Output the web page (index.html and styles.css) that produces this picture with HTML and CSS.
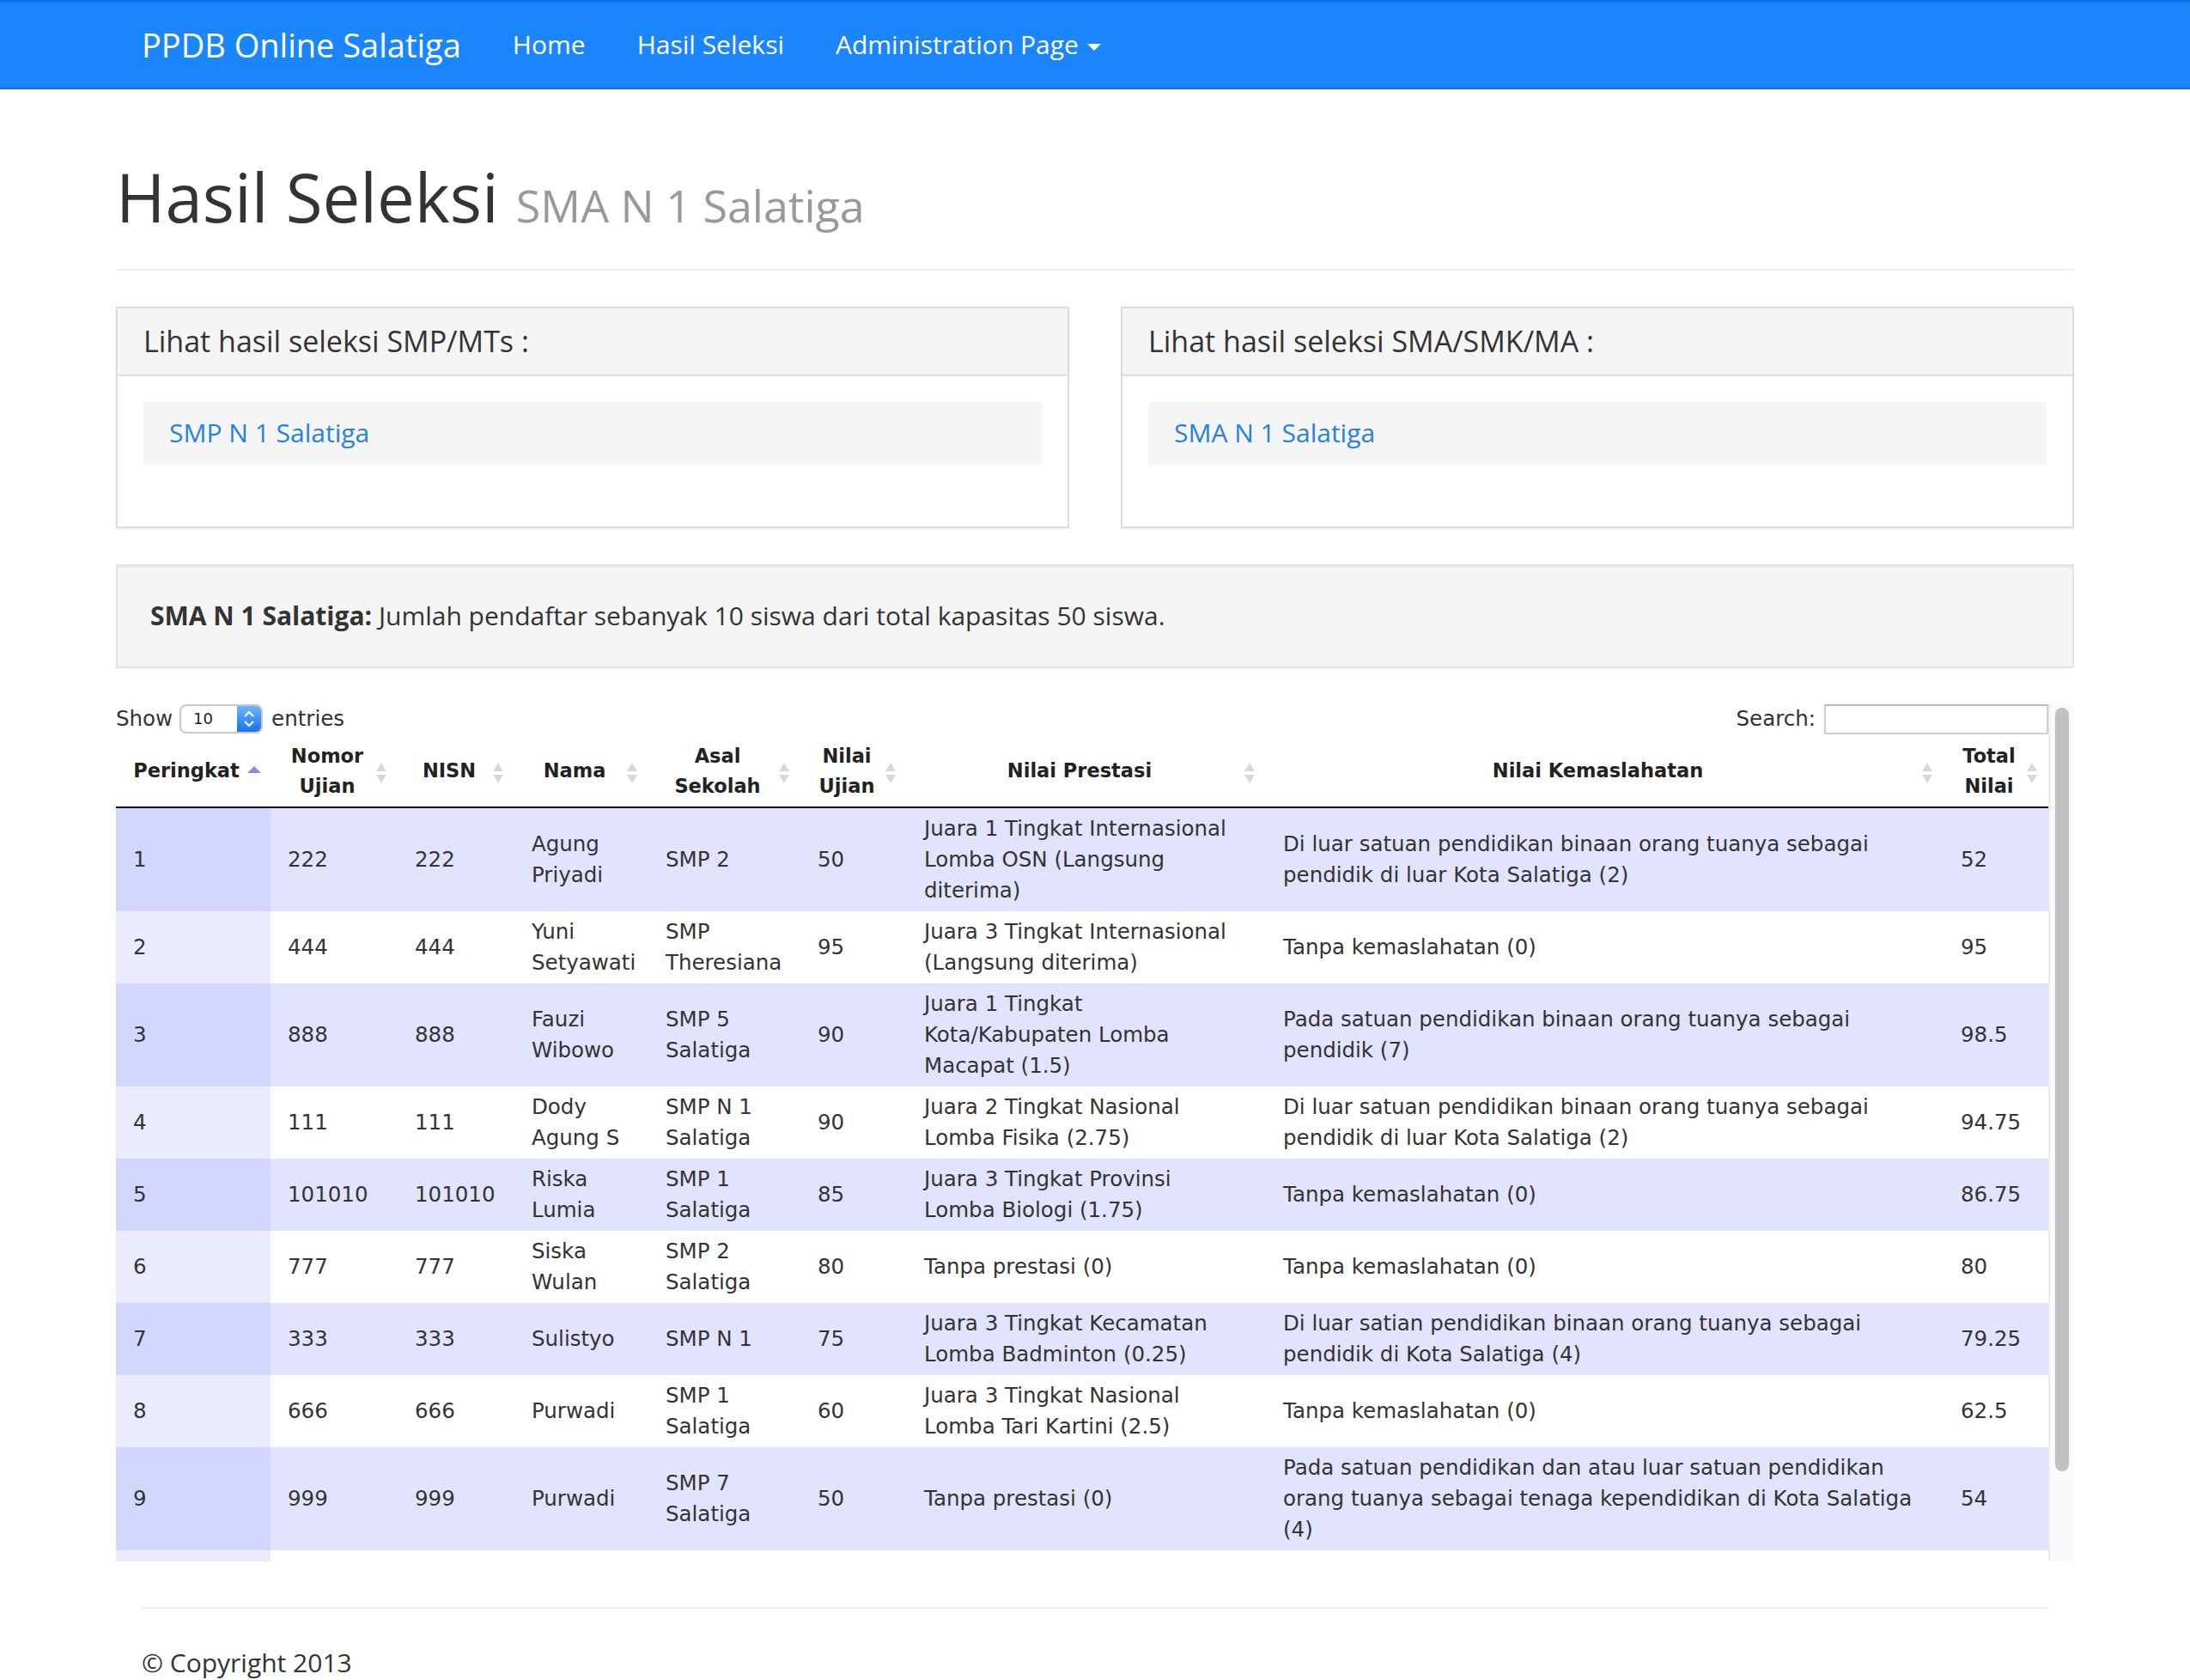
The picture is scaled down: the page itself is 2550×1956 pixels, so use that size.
FILE: index.html
```html
<!DOCTYPE html>
<html lang="id">
<head>
<meta charset="utf-8">
<title>Hasil Seleksi - PPDB Online Salatiga</title>
<link rel="stylesheet" href="styles.css">
</head>
<body>
<nav class="navbar">
  <div class="navbar-inner">
    <a class="brand" href="#">PPDB Online Salatiga</a>
    <ul class="nav">
      <li><a href="#">Home</a></li>
      <li><a href="#">Hasil Seleksi</a></li>
      <li><a href="#">Administration Page <span class="caret"></span></a></li>
    </ul>
  </div>
</nav>

<main class="container">
  <div class="page-header">
    <h1>Hasil Seleksi <small>SMA N 1 Salatiga</small></h1>
  </div>

  <div class="panels">
    <section class="panel">
      <div class="panel-heading"><h3 class="panel-title">Lihat hasil seleksi SMP/MTs :</h3></div>
      <div class="panel-body">
        <div class="link-box"><a href="#">SMP N 1 Salatiga</a></div>
      </div>
    </section>
    <section class="panel">
      <div class="panel-heading"><h3 class="panel-title">Lihat hasil seleksi SMA/SMK/MA :</h3></div>
      <div class="panel-body">
        <div class="link-box"><a href="#">SMA N 1 Salatiga</a></div>
      </div>
    </section>
  </div>

  <div class="well"><strong>SMA N 1 Salatiga:</strong> Jumlah pendaftar sebanyak 10 siswa dari total kapasitas 50 siswa.</div>

  <div class="dt-frame">
    <div class="dt-content">
      <div class="dt-controls">
        <label class="dt-length">Show
          <span class="len-select"><span class="len-val">10</span><span class="len-btn"><svg width="28" height="30" viewBox="0 0 28 30"><polyline points="9,12 14,7 19,12" fill="none" stroke="#fff" stroke-width="2.2"/><polyline points="9,18 14,23 19,18" fill="none" stroke="#fff" stroke-width="2.2"/></svg></span></span>
          entries</label>
        <label class="dt-filter">Search: <input type="text" class="search-input"></label>
      </div>
      <table class="display">
        <colgroup>
          <col class="c-rank"><col class="c-nomor"><col class="c-nisn"><col class="c-nama"><col class="c-asal"><col class="c-nilai"><col class="c-prestasi"><col class="c-kemas"><col class="c-total">
        </colgroup>
        <thead>
          <tr>
            <th class="sort-asc">Peringkat</th>
            <th class="sort-both">Nomor Ujian</th>
            <th class="sort-both">NISN</th>
            <th class="sort-both">Nama</th>
            <th class="sort-both">Asal Sekolah</th>
            <th class="sort-both">Nilai Ujian</th>
            <th class="sort-both">Nilai Prestasi</th>
            <th class="sort-both">Nilai Kemaslahatan</th>
            <th class="sort-both">Total Nilai</th>
          </tr>
        </thead>
        <tbody>
          <tr class="odd"><td class="sorting_1">1</td><td>222</td><td>222</td><td>Agung Priyadi</td><td>SMP 2</td><td>50</td><td class="prestasi">Juara 1 Tingkat Internasional Lomba OSN (Langsung diterima)</td><td>Di luar satuan pendidikan binaan orang tuanya sebagai pendidik di luar Kota Salatiga (2)</td><td>52</td></tr>
          <tr class="even"><td class="sorting_1">2</td><td>444</td><td>444</td><td>Yuni Setyawati</td><td>SMP Theresiana</td><td>95</td><td class="prestasi">Juara 3 Tingkat Internasional (Langsung diterima)</td><td>Tanpa kemaslahatan (0)</td><td>95</td></tr>
          <tr class="odd"><td class="sorting_1">3</td><td>888</td><td>888</td><td>Fauzi Wibowo</td><td>SMP 5 Salatiga</td><td>90</td><td class="prestasi">Juara 1 Tingkat Kota/&#8288;Kabupaten Lomba Macapat (1.5)</td><td>Pada satuan pendidikan binaan orang tuanya sebagai pendidik (7)</td><td>98.5</td></tr>
          <tr class="even"><td class="sorting_1">4</td><td>111</td><td>111</td><td>Dody Agung S</td><td>SMP N 1 Salatiga</td><td>90</td><td class="prestasi">Juara 2 Tingkat Nasional Lomba Fisika (2.75)</td><td>Di luar satuan pendidikan binaan orang tuanya sebagai pendidik di luar Kota Salatiga (2)</td><td>94.75</td></tr>
          <tr class="odd"><td class="sorting_1">5</td><td>101010</td><td>101010</td><td>Riska Lumia</td><td>SMP 1 Salatiga</td><td>85</td><td class="prestasi">Juara 3 Tingkat Provinsi Lomba Biologi (1.75)</td><td>Tanpa kemaslahatan (0)</td><td>86.75</td></tr>
          <tr class="even"><td class="sorting_1">6</td><td>777</td><td>777</td><td>Siska Wulan</td><td>SMP 2 Salatiga</td><td>80</td><td class="prestasi">Tanpa prestasi (0)</td><td>Tanpa kemaslahatan (0)</td><td>80</td></tr>
          <tr class="odd"><td class="sorting_1">7</td><td>333</td><td>333</td><td>Sulistyo</td><td>SMP N 1</td><td>75</td><td class="prestasi">Juara 3 Tingkat Kecamatan Lomba Badminton (0.25)</td><td>Di luar satian pendidikan binaan orang tuanya sebagai pendidik di Kota Salatiga (4)</td><td>79.25</td></tr>
          <tr class="even"><td class="sorting_1">8</td><td>666</td><td>666</td><td>Purwadi</td><td>SMP 1 Salatiga</td><td>60</td><td class="prestasi">Juara 3 Tingkat Nasional Lomba Tari Kartini (2.5)</td><td>Tanpa kemaslahatan (0)</td><td>62.5</td></tr>
          <tr class="odd"><td class="sorting_1">9</td><td>999</td><td>999</td><td>Purwadi</td><td>SMP 7 Salatiga</td><td>50</td><td class="prestasi">Tanpa prestasi (0)</td><td>Pada satuan pendidikan dan atau luar satuan pendidikan orang tuanya sebagai tenaga kependidikan di Kota Salatiga (4)</td><td>54</td></tr>
          <tr class="even"><td class="sorting_1">10</td><td>555</td><td>555</td><td>Budi Santoso</td><td>SMP 3 Salatiga</td><td>45</td><td class="prestasi">Tanpa prestasi (0)</td><td>Pada satuan pendidikan dan atau luar satuan pendidikan orang tuanya sebagai tenaga kependidikan di Kota Salatiga (4)</td><td>49</td></tr>
        </tbody>
      </table>
    </div>
    <div class="dt-track"><div class="dt-thumb"></div></div>
  </div>

  <footer class="footer">
    <hr>
    <p>&copy; Copyright 2013</p>
  </footer>
</main>
</body>
</html>
```
FILE: styles.css
```css
* { box-sizing: border-box; }
html, body { margin: 0; padding: 0; }
body {
  font-family: "Open Sans", "Liberation Sans", sans-serif;
  font-size: 30px;
  line-height: 1.428571;
  color: #333;
  background: #fff;
}
a { color: #2780e3; text-decoration: none; }

/* navbar */
.navbar {
  background: #1b86fc;
  border-top: 2px solid #0d6fdc;
  border-bottom: 2px solid #0d6fdc;
  height: 104px;
}
.navbar-inner {
  width: 2340px;
  margin: 0 auto;
  padding: 0 30px;
  height: 100px;
  display: flex;
  align-items: center;
}
.brand {
  color: #fff;
  font-size: 38px;
  line-height: 40px;
  padding: 30px;
}
.nav { display: flex; list-style: none; margin: 0; padding: 0; }
.nav a {
  display: block;
  color: #fff;
  padding: 30px;
  line-height: 40px;
}
.caret {
  display: inline-block;
  width: 0;
  height: 0;
  margin-left: 2px;
  vertical-align: middle;
  border-top: 8px solid #fff;
  border-left: 8px solid transparent;
  border-right: 8px solid transparent;
}

/* layout */
.container { width: 2340px; margin: 0 auto; padding: 0 30px; }

.page-header {
  margin: 83px 0 42px;
  padding-bottom: 19px;
  border-bottom: 2px solid #eee;
}
.page-header h1 {
  margin: 0 0 21px;
  font-size: 78px;
  font-weight: 400;
  line-height: 1.1;
  color: #333;
}
.page-header h1 small { font-size: 52px; color: #999; font-weight: 400; }

.panels {
  display: grid;
  grid-template-columns: 1fr 1fr;
  gap: 60px;
  margin-bottom: 42px;
}
.panel {
  border: 2px solid #ddd;
  background: #fff;
  box-shadow: 0 2px 2px rgba(0,0,0,0.05);
}
.panel-heading {
  background: #f5f5f5;
  border-bottom: 2px solid #ddd;
  padding: 20px 30px;
}
.panel-title { margin: 0; font-size: 34px; line-height: 1.1; font-weight: 400; color: #333; }
.panel-body { padding: 30px; }
.link-box {
  background: #f5f5f5;
  padding: 15px 30px;
  margin-bottom: 42px;
}

.well {
  background: #f5f5f5;
  border: 2px solid #e3e3e3;
  box-shadow: inset 0 2px 2px rgba(0,0,0,0.05);
  padding: 37px 38px;
  margin-bottom: 42px;
}
.well strong { font-weight: 700; }

/* data table in a scrolling frame */
.dt-frame {
  display: flex;
  height: 998px;
  font-family: "DejaVu Sans", Verdana, sans-serif;
  font-size: 24.5px;
  line-height: 36px;
  color: #333;
}
.dt-content {
  flex: 1;
  min-width: 0;
  overflow: hidden;
}
.dt-track {
  flex: 0 0 30px;
  background: #fafafa;
  border-left: 2px solid #ececec;
  padding: 4px 6px 0 6px;
}
.dt-thumb {
  height: 889px;
  background: #c1c1c1;
  border-radius: 8px;
}
.dt-controls {
  display: flex;
  justify-content: space-between;
  height: 37px;
}
.dt-length, .dt-filter {
  display: flex;
  align-items: center;
  height: 35px;
  white-space: nowrap;
}
.len-select {
  display: inline-flex;
  width: 97px;
  height: 34px;
  margin: 0 10px 0 8px;
  border: 2px solid #c8c8c8;
  border-radius: 8px;
  background: #fff;
  overflow: hidden;
}
.len-val {
  flex: 1;
  font-size: 18px;
  line-height: 30px;
  padding-left: 14px;
  color: #222;
}
.len-btn {
  width: 28px;
  background: linear-gradient(#6db4fb, #1672ee);
  display: flex;
  align-items: center;
  justify-content: center;
}
.len-btn svg { display: block; }
.search-input {
  width: 261px;
  height: 35px;
  margin: 0 0 0 10px;
  border: 2px solid #cfcfcf;
  border-top-color: #b9b9b9;
  padding: 0 6px;
  font: inherit;
  background: #fff;
}

table.display {
  width: 100%;
  table-layout: fixed;
  border-collapse: separate;
  border-spacing: 0;
}
.c-rank { width: 180px; }
.c-nomor { width: 148px; }
.c-nisn { width: 136px; }
.c-nama { width: 156px; }
.c-asal { width: 177px; }
.c-nilai { width: 124px; }
.c-prestasi { width: 418px; }
.c-total { width: 122px; }

table.display th {
  position: relative;
  font-size: 22.5px;
  line-height: 35px;
  font-weight: bold;
  text-align: center;
  padding: 6px 36px 6px 20px;
  border-bottom: 2px solid #000;
  color: #222;
}
table.display th.sort-both::before,
table.display th.sort-both::after,
table.display th.sort-asc::before {
  content: "";
  position: absolute;
  right: 13px;
  width: 0;
  height: 0;
  border-left: 6px solid transparent;
  border-right: 6px solid transparent;
}
table.display th.sort-both::before {
  top: calc(50% - 10px);
  border-bottom: 10px solid #d8d8d8;
}
table.display th.sort-both::after {
  top: calc(50% + 4px);
  border-top: 10px solid #d8d8d8;
}
table.display th.sort-asc::before {
  right: 11px;
  top: calc(50% - 6px);
  border-left-width: 8px;
  border-right-width: 8px;
  border-bottom: 8px solid #878cdc;
}
table.display td {
  padding: 6px 20px;
  line-height: 36px;
  vertical-align: middle;
}
table.display td.prestasi { padding-right: 40px; }
tr.odd td { background: #e2e4ff; }
tr.odd td.sorting_1 { background: #d3d6ff; }
tr.even td { background: #fff; }
tr.even td.sorting_1 { background: #eaebff; }

.footer { padding: 11px 30px 0; }
.footer hr { margin: 42px 0; border: 0; border-top: 2px solid #eee; }
.footer p { margin: 0; }
```
